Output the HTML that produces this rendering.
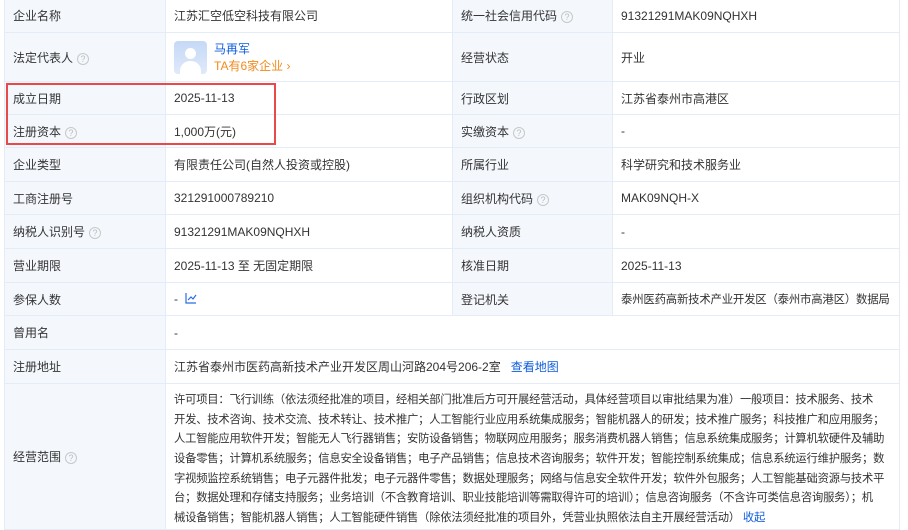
<!DOCTYPE html>
<html><head><meta charset="utf-8"><style>
*{margin:0;padding:0;box-sizing:border-box}
body{width:908px;height:524px;overflow:hidden;background:#fff;font-family:"Liberation Sans","Noto Sans CJK SC",sans-serif;font-size:12px;color:#333}
table{position:absolute;left:4px;top:-2px;border-collapse:collapse;table-layout:fixed;width:895px}
td{border:1px solid #e3ecf7;padding:0 8px;vertical-align:middle;white-space:nowrap;overflow:hidden}
td.l{background:#f4f8fd;color:#333}
.q{display:inline-block;width:12px;height:12px;border:1px solid #c8c8c8;border-radius:50%;color:#bbb;font-size:9px;line-height:10px;text-align:center;vertical-align:0px;margin-left:4px}
a{color:#0f5ddb;text-decoration:none}
.scope div{line-height:19.7px;height:19.7px;font-size:11.3px;letter-spacing:-0.2px}
.red{position:absolute;left:6px;top:83px;width:270px;height:62px;border:2px solid #e84a4a}
</style></head><body>
<table>
<colgroup><col style="width:161px"><col style="width:287px"><col style="width:160px"><col style="width:287px"></colgroup>
<tr style="height:34px"><td class="l">企业名称</td><td>江苏汇空低空科技有限公司</td><td class="l">统一社会信用代码<span class="q">?</span></td><td>91321291MAK09NQHXH</td></tr>
<tr style="height:49px"><td class="l">法定代表人<span class="q">?</span></td><td><div style="position:relative;height:34px">
<div style="position:absolute;left:0;top:1px;width:33px;height:33px;border-radius:4px;background:linear-gradient(#c5d9f6,#dfe9fa);overflow:hidden"><div style="position:absolute;left:11px;top:7px;width:11px;height:11px;border-radius:50%;background:#fff"></div><div style="position:absolute;left:6px;top:20px;width:21px;height:16px;border-radius:10px 10px 0 0;background:#fff"></div></div>
<div style="position:absolute;left:40px;top:0;color:#0f5ddb;font-size:12px">马再军</div>
<div style="position:absolute;left:40px;top:17px;color:#f08a1c;font-size:12px">TA有6家企业 ›</div></div></td><td class="l">经营状态</td><td>开业</td></tr>
<tr style="height:33px"><td class="l">成立日期</td><td>2025-11-13</td><td class="l">行政区划</td><td>江苏省泰州市高港区</td></tr>
<tr style="height:33px"><td class="l">注册资本<span class="q">?</span></td><td>1,000万(元)</td><td class="l">实缴资本<span class="q">?</span></td><td>-</td></tr>
<tr style="height:34px"><td class="l">企业类型</td><td>有限责任公司(自然人投资或控股)</td><td class="l">所属行业</td><td>科学研究和技术服务业</td></tr>
<tr style="height:33px"><td class="l">工商注册号</td><td>321291000789210</td><td class="l">组织机构代码<span class="q">?</span></td><td>MAK09NQH-X</td></tr>
<tr style="height:34px"><td class="l">纳税人识别号<span class="q">?</span></td><td>91321291MAK09NQHXH</td><td class="l">纳税人资质</td><td>-</td></tr>
<tr style="height:34px"><td class="l">营业期限</td><td>2025-11-13 至 无固定期限</td><td class="l">核准日期</td><td>2025-11-13</td></tr>
<tr style="height:33px"><td class="l">参保人数</td><td>- &nbsp;<svg width="12" height="12" viewBox="0 0 12 12" style="vertical-align:-1px"><path d="M1 1V11H11M3 8L6 5L8 7L11 3" fill="none" stroke="#2a6de0" stroke-width="1.2"/></svg></td><td class="l">登记机关</td><td style="font-size:11.4px;letter-spacing:-0.2px">泰州医药高新技术产业开发区（泰州市高港区）数据局</td></tr>
<tr style="height:34px"><td class="l">曾用名</td><td colspan="3">-</td></tr>
<tr style="height:34px"><td class="l">注册地址</td><td colspan="3">江苏省泰州市医药高新技术产业开发区周山河路204号206-2室 &nbsp; <a>查看地图</a></td></tr>
<tr style="height:145px"><td class="l">经营范围<span class="q">?</span></td><td colspan="3" class="scope" style="vertical-align:top;padding-top:7px"><div>许可项目：飞行训练（依法须经批准的项目，经相关部门批准后方可开展经营活动，具体经营项目以审批结果为准）一般项目：技术服务、技术</div><div>开发、技术咨询、技术交流、技术转让、技术推广；人工智能行业应用系统集成服务；智能机器人的研发；技术推广服务；科技推广和应用服务；</div><div>人工智能应用软件开发；智能无人飞行器销售；安防设备销售；物联网应用服务；服务消费机器人销售；信息系统集成服务；计算机软硬件及辅助</div><div>设备零售；计算机系统服务；信息安全设备销售；电子产品销售；信息技术咨询服务；软件开发；智能控制系统集成；信息系统运行维护服务；数</div><div>字视频监控系统销售；电子元器件批发；电子元器件零售；数据处理服务；网络与信息安全软件开发；软件外包服务；人工智能基础资源与技术平</div><div>台；数据处理和存储支持服务；业务培训（不含教育培训、职业技能培训等需取得许可的培训）；信息咨询服务（不含许可类信息咨询服务）；机</div><div>械设备销售；智能机器人销售；人工智能硬件销售（除依法须经批准的项目外，凭营业执照依法自主开展经营活动） <a>收起</a></div></td></tr>
</table>
<div class="red"></div>
</body></html>
